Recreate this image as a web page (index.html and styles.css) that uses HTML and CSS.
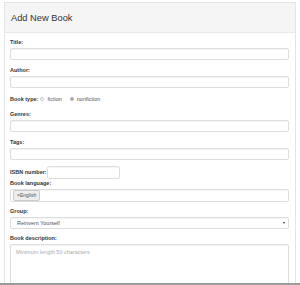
FILE: index.html
```html
<!DOCTYPE html>
<html lang="en">
<head>
    <meta charset="UTF-8">
    <meta name="viewport" content="width=device-width, initial-scale=1.0">
    <title>Add New Book</title>
    <link rel="stylesheet" href="styles.css">
</head>
<body>
    <div class="panel">
        <div class="panel-heading">
            <h3>Add New Book</h3>
        </div>
        <div class="panel-body">
            <form action="/books" method="post">
                <div class="form-group">
                    <label for="title">Title:</label>
                    <input type="text" id="title" name="title" class="form-control">
                </div>

                <div class="form-group">
                    <label for="author">Author:</label>
                    <input type="text" id="author" name="author" class="form-control">
                </div>

                <div class="form-group inline-group">
                    <span class="inline-label">Book type:</span>
                    <span class="option"><span class="radio"></span>fiction</span>
                    <span class="option"><span class="radio checked"></span>nonfiction</span>
                </div>

                <div class="form-group">
                    <label for="genres">Genres:</label>
                    <input type="text" id="genres" name="genres" class="form-control">
                </div>

                <div class="form-group">
                    <label for="tags">Tags:</label>
                    <input type="text" id="tags" name="tags" class="form-control">
                </div>

                <div class="form-group inline-group isbn-group">
                    <label for="isbn" class="inline-label">ISBN number:</label>
                    <input type="text" id="isbn" name="isbn" class="form-control isbn-input">
                </div>

                <div class="form-group tight">
                    <label>Book language:</label>
                    <div class="form-control tag-input">
                        <span class="tag">×English</span>
                    </div>
                </div>

                <div class="form-group tight">
                    <label>Group:</label>
                    <div class="form-control select">
                        <span>Reinvent Yourself</span>
                        <span class="caret"></span>
                    </div>
                </div>

                <div class="form-group">
                    <label for="description">Book description:</label>
                    <textarea id="description" name="description" class="form-control description" placeholder="Minimum length 50 characters"></textarea>
                </div>
            </form>
        </div>
    </div>
    <div class="bottom-edge"></div>
</body>
</html>
```

FILE: styles.css
```css
body {
    margin: 0;
    height: 285px;
    overflow: hidden;
    font-family: "Liberation Sans", Arial, sans-serif;
    color: #333;
    background-color: #fff;
}
.panel {
    margin: 2px 4px 0 4px;
    border: 1px solid #e4e4e4;
    border-bottom: none;
}
.panel-heading {
    display: flex;
    align-items: center;
    height: 29px;
    padding-left: 6px;
    background-color: #f5f5f5;
    border-bottom: 1px solid #e8e8e8;
}
.panel-heading h3 {
    margin: 0;
    font-size: 9.3px;
    font-weight: normal;
}
.panel-body {
    padding: 5px 6px 0 5px;
}
.form-group {
    margin-bottom: 6px;
}
.form-group.tight {
    margin-bottom: 5px;
}
.form-group > label {
    display: block;
    font-size: 5.5px;
    font-weight: bold;
    line-height: 8px;
    margin-bottom: 2px;
}
.form-control {
    display: block;
    width: 100%;
    height: 12px;
    box-sizing: border-box;
    padding: 0 5px;
    border: 1px solid #ddd;
    border-radius: 2px;
    background-color: #fff;
    box-shadow: inset 0 1px 1px rgba(0,0,0,0.04);
    font-family: "Liberation Sans", Arial, sans-serif;
    font-size: 5.5px;
    color: #555;
}
.inline-group {
    display: flex;
    align-items: center;
    height: 10px;
    font-size: 5.5px;
}
.inline-label {
    font-weight: bold;
    margin-right: 2px;
}
.option {
    display: flex;
    align-items: center;
    margin-right: 8px;
    color: #555;
}
.radio {
    width: 4px;
    height: 4px;
    margin-right: 3px;
    border: 1px solid #c4c4c4;
    border-radius: 50%;
    box-sizing: border-box;
}
.radio.checked {
    border-color: #aaa;
    background: radial-gradient(circle, #555 0 45%, #fff 55%);
}
.isbn-group {
    height: 13px;
    margin-bottom: 0;
}
.isbn-group .inline-label {
    margin-right: 0;
}
.isbn-input {
    width: 73px;
    height: 13px;
}
.tag-input {
    display: flex;
    align-items: center;
    height: 13px;
    padding: 0 2px;
}
.tag {
    height: 9px;
    padding: 0 3px;
    line-height: 9px;
    font-size: 5px;
    color: #555;
    background-color: #eee;
    border: 1px solid #ccc;
    border-radius: 2px;
}
.select {
    display: flex;
    justify-content: space-between;
    align-items: center;
    padding: 0 3px 0 6px;
}
.caret {
    border-left: 1.5px solid transparent;
    border-right: 1.5px solid transparent;
    border-top: 2px solid #333;
}
.description {
    height: 40px;
    padding: 4px 5px;
    resize: none;
}
.description::placeholder {
    color: #aaa;
}
.bottom-edge {
    position: fixed;
    left: 0;
    right: 0;
    bottom: 0;
    height: 2px;
    background-color: #9b9b9b;
}
```
